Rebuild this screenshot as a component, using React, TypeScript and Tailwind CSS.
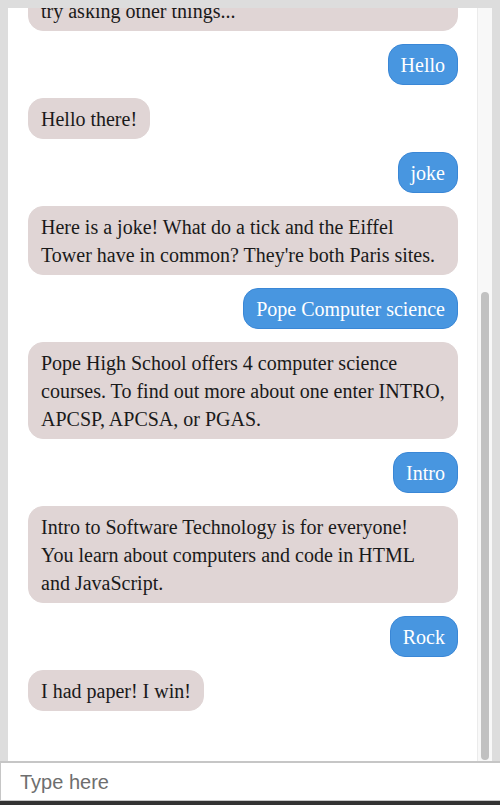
import React from "react";

type Msg = { from: "bot" | "user"; text: React.ReactNode };

const messages: Msg[] = [
  {
    from: "bot",
    text: (
      <>
        Hi! I'm the Pope chatbot. Ask me for a joke, ask about Pope computer
        science, or play rock paper scissors. You can also
        <br />
        try asking other things...
      </>
    ),
  },
  { from: "user", text: "Hello" },
  { from: "bot", text: "Hello there!" },
  { from: "user", text: "joke" },
  {
    from: "bot",
    text: "Here is a joke! What do a tick and the Eiffel Tower have in common? They're both Paris sites.",
  },
  { from: "user", text: "Pope Computer science" },
  {
    from: "bot",
    text: "Pope High School offers 4 computer science courses. To find out more about one enter INTRO, APCSP, APCSA, or PGAS.",
  },
  { from: "user", text: "Intro" },
  {
    from: "bot",
    text: (
      <>
        Intro to Software Technology is for everyone!
        <br />
        You learn about computers and code in HTML and JavaScript.
      </>
    ),
  },
  { from: "user", text: "Rock" },
  { from: "bot", text: "I had paper! I win!" },
];

export default function App() {
  return (
    <div className="h-[805px] w-[500px] flex flex-col bg-[#dddddd] overflow-hidden">
      <div className="flex-1 min-h-0 flex pt-[8px] pl-[8px] pr-[8px]">
        <div className="flex-1 min-w-0 flex bg-white">
          <div
            className="flex-1 min-w-0 flex flex-col justify-end gap-[13px] pl-[20px] pr-[19px] pb-[50px] overflow-hidden"
            style={{ fontFamily: '"Liberation Serif", "Times New Roman", serif' }}
          >
            {messages.map((m, i) =>
              m.from === "bot" ? (
                <div key={i} className="flex justify-start shrink-0">
                  <div className="rounded-[15px] border border-[#e0d5d5] bg-[#e0d5d5] px-[12px] py-[5.5px] text-[20px] leading-[28px] text-[#1a1a1a]">
                    {m.text}
                  </div>
                </div>
              ) : (
                <div key={i} className="flex justify-end shrink-0">
                  <div className="rounded-[15px] border border-[#3a87d6] bg-[#4896e0] px-[12px] py-[5.5px] text-[20px] leading-[28px] text-white">
                    {m.text}
                  </div>
                </div>
              )
            )}
          </div>
          <div className="w-[15px] shrink-0 flex flex-col items-center bg-[#f8f8f8] border-l border-[#ebebeb] pt-[284px] pb-[1px]">
            <div className="w-[8px] flex-1 rounded-full bg-[#c1c1c1]" />
          </div>
        </div>
      </div>
      <input
        className="h-[40px] w-full shrink-0 bg-white border border-r-0 border-t-2 border-[#c6c6c6] px-[19px] pt-[2px] text-[20px] text-[#222] placeholder:text-[#6e6e6e] outline-none"
        style={{ fontFamily: '"Liberation Sans", Arial, sans-serif' }}
        placeholder="Type here"
      />
      <div className="h-[4px] shrink-0 bg-[#333333]" />
    </div>
  );
}
